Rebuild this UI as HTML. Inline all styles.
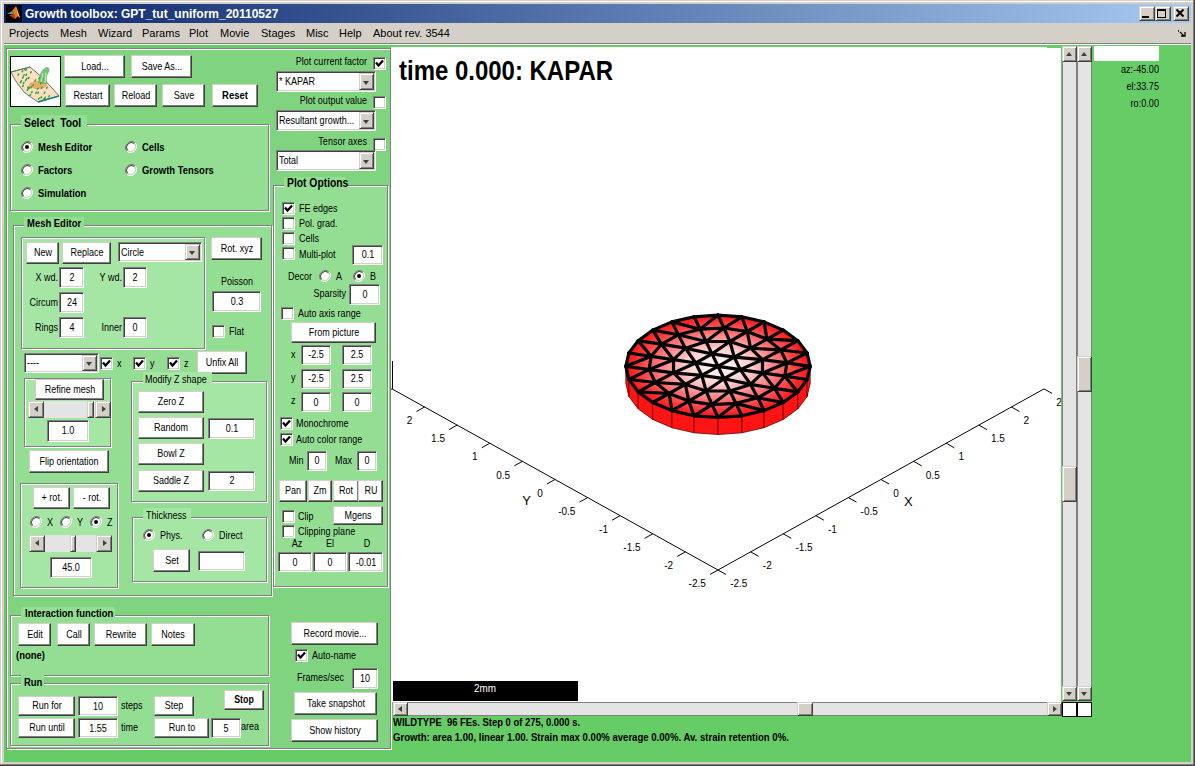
<!DOCTYPE html>
<html><head><meta charset="utf-8"><style>
html,body{margin:0;padding:0;width:1195px;height:766px;overflow:hidden;background:#d4d0c8;font-family:"Liberation Sans",sans-serif}
#root{position:relative;width:1195px;height:766px;overflow:hidden}
.t{position:absolute;white-space:pre;font-family:"Liberation Sans",sans-serif}
.b{position:absolute;background:#fff;border:1px solid;border-color:#d4d0c8 #404040 #404040 #d4d0c8;box-shadow:inset -1px -1px 0 #808080}
.sb{position:absolute;background:#d4d0c8;border:1px solid;border-color:#d4d0c8 #404040 #404040 #d4d0c8;box-shadow:inset 1px 1px 0 #fff,inset -1px -1px 0 #808080}
.e{position:absolute;background:#fff;border:1px solid;border-color:#808080 #fff #fff #808080;box-shadow:inset 1px 1px 0 #404040,inset -1px -1px 0 #d4d0c8}
.c{position:absolute;width:11px;height:11px;background:#fff;border:1px solid;border-color:#808080 #fff #fff #808080;box-shadow:inset 1px 1px 0 #404040,inset -1px -1px 0 #d4d0c8}
</style></head><body><div id="root">
<div style="position:absolute;left:0px;top:0px;width:1195px;height:766px;background:#d4d0c8"></div>
<div style="position:absolute;left:1px;top:1px;width:1192px;height:763px;border-left:1px solid #fff;border-top:1px solid #fff;box-sizing:border-box"></div>
<div style="position:absolute;left:0px;top:0px;width:1195px;height:766px;border-right:1px solid #404040;border-bottom:1px solid #404040;box-sizing:border-box"></div>
<div style="position:absolute;left:0px;top:0px;width:1194px;height:765px;border-right:1px solid #808080;border-bottom:1px solid #808080;box-sizing:border-box"></div>
<div style="position:absolute;left:4px;top:4px;width:1187px;height:19px;background:linear-gradient(to right,#0a246a,#a6caf0)"></div>
<svg style="position:absolute;left:6px;top:5px" width="16" height="17" viewBox="0 0 16 17">
<rect width="16" height="17" fill="#000"/>
<path d="M1 9 L6 6 L8 9 Z" fill="#3aa0c8"/>
<path d="M6 6 L10 1 L14 13 L12 11 L9 14 L8 9 Z" fill="#e87818"/>
<path d="M10 1 L14 13 L12 11 Z" fill="#f8c040"/>
<path d="M3 10 L8 9 L9 14 Z" fill="#c04010"/>
</svg>
<div class="t" style="left:25px;top:8px;font-size:12px;line-height:12px;font-weight:bold;color:#fff;transform:scaleX(1.0);transform-origin:0 0;">Growth toolbox: GPT_tut_uniform_20110527</div>
<div class="sb" style="left:1139px;top:6px;width:14px;height:13px;"></div>
<div class="sb" style="left:1155px;top:6px;width:14px;height:13px;"></div>
<div class="sb" style="left:1173px;top:6px;width:14px;height:13px;"></div>
<div style="position:absolute;left:1142px;top:16px;width:7px;height:2px;background:#000"></div>
<div style="position:absolute;left:1157px;top:9px;width:7px;height:6px;border:1px solid #000;border-top-width:2px"></div>
<svg style="position:absolute;left:1175px;top:8px" width="11" height="11"><path d="M1.5 1.5 L8.5 8.5 M8.5 1.5 L1.5 8.5" stroke="#000" stroke-width="2"/></svg>
<div class="t" style="left:9px;top:28px;font-size:11px;line-height:11px;color:#000;transform:scaleX(1.0);transform-origin:0 0;">Projects</div>
<div class="t" style="left:60px;top:28px;font-size:11px;line-height:11px;color:#000;transform:scaleX(1.0);transform-origin:0 0;">Mesh</div>
<div class="t" style="left:98px;top:28px;font-size:11px;line-height:11px;color:#000;transform:scaleX(1.0);transform-origin:0 0;">Wizard</div>
<div class="t" style="left:142px;top:28px;font-size:11px;line-height:11px;color:#000;transform:scaleX(1.0);transform-origin:0 0;">Params</div>
<div class="t" style="left:189px;top:28px;font-size:11px;line-height:11px;color:#000;transform:scaleX(1.0);transform-origin:0 0;">Plot</div>
<div class="t" style="left:220px;top:28px;font-size:11px;line-height:11px;color:#000;transform:scaleX(1.0);transform-origin:0 0;">Movie</div>
<div class="t" style="left:261px;top:28px;font-size:11px;line-height:11px;color:#000;transform:scaleX(1.0);transform-origin:0 0;">Stages</div>
<div class="t" style="left:306px;top:28px;font-size:11px;line-height:11px;color:#000;transform:scaleX(1.0);transform-origin:0 0;">Misc</div>
<div class="t" style="left:339px;top:28px;font-size:11px;line-height:11px;color:#000;transform:scaleX(1.0);transform-origin:0 0;">Help</div>
<div class="t" style="left:373px;top:28px;font-size:11px;line-height:11px;color:#000;transform:scaleX(1.0);transform-origin:0 0;">About rev. 3544</div>
<svg style="position:absolute;left:1177px;top:30px" width="10" height="8"><path d="M1 1 L2 1 M3 2 L7 6 M4 6 L8 6 L8 2" stroke="#000" stroke-width="1.3" fill="none"/></svg>
<div style="position:absolute;left:4px;top:43px;width:1187px;height:1px;background:#808080"></div>
<div style="position:absolute;left:4px;top:44px;width:1187px;height:1px;background:#fff"></div>
<div style="position:absolute;left:4px;top:45px;width:1187px;height:717px;background:#66cc66"></div>
<div style="position:absolute;left:6px;top:48px;width:383px;height:699px;border:1px solid #808080;background:#80d480;box-shadow:1px 1px 0 #fff, inset 1px 1px 0 #fff"></div>
<div style="position:absolute;left:10px;top:56px;width:49px;height:49px;border:1px solid #000;background:#fff;overflow:hidden">
<svg width="49" height="49" viewBox="1 1 49 49">
<path d="M1,16 L20,11 Q34,22 49,40 L28,46 Q20,41 14,36 Q8,29 4,22 Z" fill="#fbdfc2" stroke="#3a3a3a" stroke-width="0.7"/>
<path d="M28,46 L49,40" stroke="#1f7f7f" stroke-width="1.6"/>
<path d="M1,16 L20,11" stroke="#3f7f6f" stroke-width="0.9"/>
<ellipse cx="28" cy="29" rx="9" ry="4" fill="#eb9a4a" opacity="0.75"/>
<path d="M28,27 Q29,15 36,11 Q41,11 39,16 Q36,19 37,28 Z" fill="#5fb85f" opacity="0.85"/>
<path d="M31,26 L33,17 M35,27 L36,17" stroke="#d8f0d8" stroke-width="0.9"/>
<g fill="#2f9f3f"><ellipse cx="12.9" cy="30.0" rx="0.8" ry="1.4" transform="rotate(30 12.9 30.0)"/><ellipse cx="19.0" cy="32.1" rx="0.8" ry="1.4" transform="rotate(30 19.0 32.1)"/><ellipse cx="13.9" cy="19.2" rx="0.8" ry="1.4" transform="rotate(30 13.9 19.2)"/><ellipse cx="31.2" cy="41.4" rx="0.8" ry="1.4" transform="rotate(30 31.2 41.4)"/><ellipse cx="26.1" cy="36.9" rx="0.8" ry="1.4" transform="rotate(30 26.1 36.9)"/><ellipse cx="36.9" cy="31.7" rx="0.8" ry="1.4" transform="rotate(30 36.9 31.7)"/><ellipse cx="35.1" cy="41.8" rx="0.8" ry="1.4" transform="rotate(30 35.1 41.8)"/><ellipse cx="34.8" cy="43.2" rx="0.8" ry="1.4" transform="rotate(30 34.8 43.2)"/><ellipse cx="20.2" cy="39.0" rx="0.8" ry="1.4" transform="rotate(30 20.2 39.0)"/><ellipse cx="8.3" cy="18.6" rx="0.8" ry="1.4" transform="rotate(30 8.3 18.6)"/><ellipse cx="25.3" cy="24.5" rx="0.8" ry="1.4" transform="rotate(30 25.3 24.5)"/><ellipse cx="18.1" cy="31.5" rx="0.8" ry="1.4" transform="rotate(30 18.1 31.5)"/><ellipse cx="28.9" cy="42.6" rx="0.8" ry="1.4" transform="rotate(30 28.9 42.6)"/><ellipse cx="33.4" cy="43.5" rx="0.8" ry="1.4" transform="rotate(30 33.4 43.5)"/><ellipse cx="15.1" cy="13.2" rx="0.8" ry="1.4" transform="rotate(30 15.1 13.2)"/><ellipse cx="20.9" cy="16.3" rx="0.8" ry="1.4" transform="rotate(30 20.9 16.3)"/><ellipse cx="16.2" cy="13.7" rx="0.8" ry="1.4" transform="rotate(30 16.2 13.7)"/><ellipse cx="11.1" cy="25.3" rx="0.8" ry="1.4" transform="rotate(30 11.1 25.3)"/><ellipse cx="23.2" cy="29.2" rx="0.8" ry="1.4" transform="rotate(30 23.2 29.2)"/><ellipse cx="31.6" cy="31.8" rx="0.8" ry="1.4" transform="rotate(30 31.6 31.8)"/><ellipse cx="27.7" cy="32.7" rx="0.8" ry="1.4" transform="rotate(30 27.7 32.7)"/><ellipse cx="21.8" cy="36.2" rx="0.8" ry="1.4" transform="rotate(30 21.8 36.2)"/><ellipse cx="12.9" cy="21.5" rx="0.8" ry="1.4" transform="rotate(30 12.9 21.5)"/><ellipse cx="21.1" cy="31.3" rx="0.8" ry="1.4" transform="rotate(30 21.1 31.3)"/><ellipse cx="30.9" cy="27.3" rx="0.8" ry="1.4" transform="rotate(30 30.9 27.3)"/><ellipse cx="34.5" cy="36.8" rx="0.8" ry="1.4" transform="rotate(30 34.5 36.8)"/><ellipse cx="13.6" cy="27.0" rx="0.8" ry="1.4" transform="rotate(30 13.6 27.0)"/><ellipse cx="29.3" cy="22.2" rx="0.8" ry="1.4" transform="rotate(30 29.3 22.2)"/><ellipse cx="18.7" cy="21.9" rx="0.8" ry="1.4" transform="rotate(30 18.7 21.9)"/><ellipse cx="19.0" cy="31.8" rx="0.8" ry="1.4" transform="rotate(30 19.0 31.8)"/><ellipse cx="15.8" cy="24.2" rx="0.8" ry="1.4" transform="rotate(30 15.8 24.2)"/><ellipse cx="28.2" cy="36.7" rx="0.8" ry="1.4" transform="rotate(30 28.2 36.7)"/><ellipse cx="16.3" cy="18.8" rx="0.8" ry="1.4" transform="rotate(30 16.3 18.8)"/><ellipse cx="10.6" cy="26.2" rx="0.8" ry="1.4" transform="rotate(30 10.6 26.2)"/><ellipse cx="16.8" cy="22.7" rx="0.8" ry="1.4" transform="rotate(30 16.8 22.7)"/><ellipse cx="17.5" cy="33.8" rx="0.8" ry="1.4" transform="rotate(30 17.5 33.8)"/><ellipse cx="12.4" cy="15.2" rx="0.8" ry="1.4" transform="rotate(30 12.4 15.2)"/><ellipse cx="39.1" cy="40.3" rx="0.8" ry="1.4" transform="rotate(30 39.1 40.3)"/></g></svg></div>
<div class="b" style="left:64px;top:55px;width:59px;height:21px;"></div>
<div class="t" style="left:-505.5px;width:1200px;text-align:center;top:61px;font-size:11px;line-height:11px;color:#000;transform:scaleX(0.82);transform-origin:50% 0;">Load...</div>
<div class="b" style="left:131px;top:55px;width:59px;height:21px;"></div>
<div class="t" style="left:-438.5px;width:1200px;text-align:center;top:61px;font-size:11px;line-height:11px;color:#000;transform:scaleX(0.82);transform-origin:50% 0;">Save As...</div>
<div class="b" style="left:65px;top:84px;width:43px;height:21px;"></div>
<div class="t" style="left:-512.5px;width:1200px;text-align:center;top:90px;font-size:11px;line-height:11px;color:#000;transform:scaleX(0.82);transform-origin:50% 0;">Restart</div>
<div class="b" style="left:114px;top:84px;width:41px;height:21px;"></div>
<div class="t" style="left:-464.5px;width:1200px;text-align:center;top:90px;font-size:11px;line-height:11px;color:#000;transform:scaleX(0.82);transform-origin:50% 0;">Reload</div>
<div class="b" style="left:162px;top:84px;width:41px;height:21px;"></div>
<div class="t" style="left:-416.5px;width:1200px;text-align:center;top:90px;font-size:11px;line-height:11px;color:#000;transform:scaleX(0.82);transform-origin:50% 0;">Save</div>
<div class="b" style="left:212px;top:84px;width:44px;height:21px;"></div>
<div class="t" style="left:-365.0px;width:1200px;text-align:center;top:90px;font-size:11px;line-height:11px;font-weight:bold;color:#000;transform:scaleX(0.86);transform-origin:50% 0;">Reset</div>
<div style="position:absolute;left:10px;top:124px;width:257px;height:85px;border:1px solid #808080;background:#93de93;box-shadow:1px 1px 0 #fff, inset 1px 1px 0 #fff"></div>
<div style="position:absolute;left:21px;top:115px;width:66px;height:12px;background:#93de93"></div>
<div class="t" style="left:24px;top:117px;font-size:12px;line-height:12px;font-weight:bold;color:#000;transform:scaleX(0.86);transform-origin:0 0;">Select&nbsp; Tool</div>
<svg style="position:absolute;left:21px;top:141px" width="12" height="12"><path d="M10.2 1.8 A6 6 0 0 0 1.8 10.2" stroke="#808080" stroke-width="1" fill="none"/><path d="M1.8 10.2 A6 6 0 0 0 10.2 1.8" stroke="#ffffff" stroke-width="1" fill="none"/><circle cx="6" cy="6" r="4.5" fill="#fff"/><path d="M9.5 2.5 A5 5 0 0 0 2.5 9.5" stroke="#404040" stroke-width="1" fill="none"/><path d="M2.5 9.5 A5 5 0 0 0 9.5 2.5" stroke="#d4d0c8" stroke-width="1" fill="none"/><circle cx="6" cy="6" r="2" fill="#000"/></svg>
<div class="t" style="left:38px;top:142px;font-size:11px;line-height:11px;font-weight:bold;color:#000;transform:scaleX(0.86);transform-origin:0 0;">Mesh Editor</div>
<svg style="position:absolute;left:125px;top:141px" width="12" height="12"><path d="M10.2 1.8 A6 6 0 0 0 1.8 10.2" stroke="#808080" stroke-width="1" fill="none"/><path d="M1.8 10.2 A6 6 0 0 0 10.2 1.8" stroke="#ffffff" stroke-width="1" fill="none"/><circle cx="6" cy="6" r="4.5" fill="#fff"/><path d="M9.5 2.5 A5 5 0 0 0 2.5 9.5" stroke="#404040" stroke-width="1" fill="none"/><path d="M2.5 9.5 A5 5 0 0 0 9.5 2.5" stroke="#d4d0c8" stroke-width="1" fill="none"/></svg>
<div class="t" style="left:142px;top:142px;font-size:11px;line-height:11px;font-weight:bold;color:#000;transform:scaleX(0.86);transform-origin:0 0;">Cells</div>
<svg style="position:absolute;left:21px;top:164px" width="12" height="12"><path d="M10.2 1.8 A6 6 0 0 0 1.8 10.2" stroke="#808080" stroke-width="1" fill="none"/><path d="M1.8 10.2 A6 6 0 0 0 10.2 1.8" stroke="#ffffff" stroke-width="1" fill="none"/><circle cx="6" cy="6" r="4.5" fill="#fff"/><path d="M9.5 2.5 A5 5 0 0 0 2.5 9.5" stroke="#404040" stroke-width="1" fill="none"/><path d="M2.5 9.5 A5 5 0 0 0 9.5 2.5" stroke="#d4d0c8" stroke-width="1" fill="none"/></svg>
<div class="t" style="left:38px;top:165px;font-size:11px;line-height:11px;font-weight:bold;color:#000;transform:scaleX(0.86);transform-origin:0 0;">Factors</div>
<svg style="position:absolute;left:125px;top:164px" width="12" height="12"><path d="M10.2 1.8 A6 6 0 0 0 1.8 10.2" stroke="#808080" stroke-width="1" fill="none"/><path d="M1.8 10.2 A6 6 0 0 0 10.2 1.8" stroke="#ffffff" stroke-width="1" fill="none"/><circle cx="6" cy="6" r="4.5" fill="#fff"/><path d="M9.5 2.5 A5 5 0 0 0 2.5 9.5" stroke="#404040" stroke-width="1" fill="none"/><path d="M2.5 9.5 A5 5 0 0 0 9.5 2.5" stroke="#d4d0c8" stroke-width="1" fill="none"/></svg>
<div class="t" style="left:142px;top:165px;font-size:11px;line-height:11px;font-weight:bold;color:#000;transform:scaleX(0.86);transform-origin:0 0;">Growth Tensors</div>
<svg style="position:absolute;left:21px;top:187px" width="12" height="12"><path d="M10.2 1.8 A6 6 0 0 0 1.8 10.2" stroke="#808080" stroke-width="1" fill="none"/><path d="M1.8 10.2 A6 6 0 0 0 10.2 1.8" stroke="#ffffff" stroke-width="1" fill="none"/><circle cx="6" cy="6" r="4.5" fill="#fff"/><path d="M9.5 2.5 A5 5 0 0 0 2.5 9.5" stroke="#404040" stroke-width="1" fill="none"/><path d="M2.5 9.5 A5 5 0 0 0 9.5 2.5" stroke="#d4d0c8" stroke-width="1" fill="none"/></svg>
<div class="t" style="left:38px;top:188px;font-size:11px;line-height:11px;font-weight:bold;color:#000;transform:scaleX(0.86);transform-origin:0 0;">Simulation</div>
<div class="t" style="left:-233px;width:600px;text-align:right;top:56px;font-size:11px;line-height:11px;color:#000;transform:scaleX(0.82);transform-origin:100% 0;">Plot current factor</div>
<div class="c" style="left:373px;top:57px;"></div>
<svg style="position:absolute;left:373px;top:57px" width="13" height="13"><path d="M3 5.5 L5.5 8.5 L10 3.5" stroke="#000" stroke-width="2.2" fill="none"/></svg>
<div class="e" style="left:276px;top:71px;width:98px;height:19px;"></div>
<div class="sb" style="left:359px;top:73px;width:13px;height:15px;"></div>
<div style="position:absolute;left:363.0px;top:80.5px;width:0;height:0;border-left:3.5px solid transparent;border-right:3.5px solid transparent;border-top:4px solid #404040"></div>
<div class="t" style="left:279px;top:76px;font-size:11px;line-height:11px;color:#000;transform:scaleX(0.82);transform-origin:0 0;">* KAPAR</div>
<div class="t" style="left:-233px;width:600px;text-align:right;top:95px;font-size:11px;line-height:11px;color:#000;transform:scaleX(0.82);transform-origin:100% 0;">Plot output value</div>
<div class="c" style="left:373px;top:96px;"></div>
<div class="e" style="left:276px;top:110px;width:98px;height:19px;"></div>
<div class="sb" style="left:359px;top:112px;width:13px;height:15px;"></div>
<div style="position:absolute;left:363.0px;top:119.5px;width:0;height:0;border-left:3.5px solid transparent;border-right:3.5px solid transparent;border-top:4px solid #404040"></div>
<div class="t" style="left:279px;top:115px;font-size:11px;line-height:11px;color:#000;transform:scaleX(0.82);transform-origin:0 0;">Resultant growth...</div>
<div class="t" style="left:-233px;width:600px;text-align:right;top:136px;font-size:11px;line-height:11px;color:#000;transform:scaleX(0.82);transform-origin:100% 0;">Tensor axes</div>
<div class="c" style="left:373px;top:138px;"></div>
<div class="e" style="left:276px;top:150px;width:98px;height:19px;"></div>
<div class="sb" style="left:359px;top:152px;width:13px;height:15px;"></div>
<div style="position:absolute;left:363.0px;top:159.5px;width:0;height:0;border-left:3.5px solid transparent;border-right:3.5px solid transparent;border-top:4px solid #404040"></div>
<div class="t" style="left:279px;top:155px;font-size:11px;line-height:11px;color:#000;transform:scaleX(0.82);transform-origin:0 0;">Total</div>
<div style="position:absolute;left:273px;top:185px;width:113px;height:400px;border:1px solid #808080;background:#93de93;box-shadow:1px 1px 0 #fff, inset 1px 1px 0 #fff"></div>
<div style="position:absolute;left:284px;top:177px;width:62px;height:12px;background:#93de93"></div>
<div class="t" style="left:287px;top:177px;font-size:12px;line-height:12px;font-weight:bold;color:#000;transform:scaleX(0.86);transform-origin:0 0;">Plot Options</div>
<div class="c" style="left:282px;top:202px;"></div>
<svg style="position:absolute;left:282px;top:202px" width="13" height="13"><path d="M3 5.5 L5.5 8.5 L10 3.5" stroke="#000" stroke-width="2.2" fill="none"/></svg>
<div class="t" style="left:299px;top:203px;font-size:11px;line-height:11px;color:#000;transform:scaleX(0.82);transform-origin:0 0;">FE edges</div>
<div class="c" style="left:282px;top:217px;"></div>
<div class="t" style="left:299px;top:218px;font-size:11px;line-height:11px;color:#000;transform:scaleX(0.82);transform-origin:0 0;">Pol. grad.</div>
<div class="c" style="left:282px;top:232px;"></div>
<div class="t" style="left:299px;top:233px;font-size:11px;line-height:11px;color:#000;transform:scaleX(0.82);transform-origin:0 0;">Cells</div>
<div class="c" style="left:282px;top:247px;"></div>
<div class="t" style="left:299px;top:249px;font-size:11px;line-height:11px;color:#000;transform:scaleX(0.82);transform-origin:0 0;">Multi-plot</div>
<div class="e" style="left:352px;top:245px;width:29px;height:18px;"></div>
<div class="t" style="left:-232.5px;width:1200px;text-align:center;top:249px;font-size:11px;line-height:11px;color:#000;transform:scaleX(0.82);transform-origin:50% 0;">0.1</div>
<div class="t" style="left:288px;top:271px;font-size:11px;line-height:11px;color:#000;transform:scaleX(0.82);transform-origin:0 0;">Decor</div>
<svg style="position:absolute;left:319px;top:270px" width="12" height="12"><path d="M10.2 1.8 A6 6 0 0 0 1.8 10.2" stroke="#808080" stroke-width="1" fill="none"/><path d="M1.8 10.2 A6 6 0 0 0 10.2 1.8" stroke="#ffffff" stroke-width="1" fill="none"/><circle cx="6" cy="6" r="4.5" fill="#fff"/><path d="M9.5 2.5 A5 5 0 0 0 2.5 9.5" stroke="#404040" stroke-width="1" fill="none"/><path d="M2.5 9.5 A5 5 0 0 0 9.5 2.5" stroke="#d4d0c8" stroke-width="1" fill="none"/></svg>
<div class="t" style="left:336px;top:271px;font-size:11px;line-height:11px;color:#000;transform:scaleX(0.82);transform-origin:0 0;">A</div>
<svg style="position:absolute;left:353px;top:270px" width="12" height="12"><path d="M10.2 1.8 A6 6 0 0 0 1.8 10.2" stroke="#808080" stroke-width="1" fill="none"/><path d="M1.8 10.2 A6 6 0 0 0 10.2 1.8" stroke="#ffffff" stroke-width="1" fill="none"/><circle cx="6" cy="6" r="4.5" fill="#fff"/><path d="M9.5 2.5 A5 5 0 0 0 2.5 9.5" stroke="#404040" stroke-width="1" fill="none"/><path d="M2.5 9.5 A5 5 0 0 0 9.5 2.5" stroke="#d4d0c8" stroke-width="1" fill="none"/><circle cx="6" cy="6" r="2" fill="#000"/></svg>
<div class="t" style="left:370px;top:271px;font-size:11px;line-height:11px;color:#000;transform:scaleX(0.82);transform-origin:0 0;">B</div>
<div class="t" style="left:-254px;width:600px;text-align:right;top:288px;font-size:11px;line-height:11px;color:#000;transform:scaleX(0.82);transform-origin:100% 0;">Sparsity</div>
<div class="e" style="left:349px;top:284px;width:29px;height:19px;"></div>
<div class="t" style="left:-235.5px;width:1200px;text-align:center;top:289px;font-size:11px;line-height:11px;color:#000;transform:scaleX(0.82);transform-origin:50% 0;">0</div>
<div class="c" style="left:281px;top:307px;"></div>
<div class="t" style="left:298px;top:308px;font-size:11px;line-height:11px;color:#000;transform:scaleX(0.82);transform-origin:0 0;">Auto axis range</div>
<div class="b" style="left:291px;top:322px;width:83px;height:19px;"></div>
<div class="t" style="left:-266.5px;width:1200px;text-align:center;top:327px;font-size:11px;line-height:11px;color:#000;transform:scaleX(0.82);transform-origin:50% 0;">From picture</div>
<div class="t" style="left:291px;top:349px;font-size:11px;line-height:11px;color:#000;transform:scaleX(0.82);transform-origin:0 0;">x</div>
<div class="e" style="left:301px;top:345px;width:28px;height:18px;"></div>
<div class="t" style="left:-284.0px;width:1200px;text-align:center;top:349px;font-size:11px;line-height:11px;color:#000;transform:scaleX(0.82);transform-origin:50% 0;">-2.5</div>
<div class="e" style="left:342px;top:345px;width:28px;height:18px;"></div>
<div class="t" style="left:-243.0px;width:1200px;text-align:center;top:349px;font-size:11px;line-height:11px;color:#000;transform:scaleX(0.82);transform-origin:50% 0;">2.5</div>
<div class="t" style="left:291px;top:372px;font-size:11px;line-height:11px;color:#000;transform:scaleX(0.82);transform-origin:0 0;">y</div>
<div class="e" style="left:301px;top:369px;width:28px;height:18px;"></div>
<div class="t" style="left:-284.0px;width:1200px;text-align:center;top:373px;font-size:11px;line-height:11px;color:#000;transform:scaleX(0.82);transform-origin:50% 0;">-2.5</div>
<div class="e" style="left:342px;top:369px;width:28px;height:18px;"></div>
<div class="t" style="left:-243.0px;width:1200px;text-align:center;top:373px;font-size:11px;line-height:11px;color:#000;transform:scaleX(0.82);transform-origin:50% 0;">2.5</div>
<div class="t" style="left:291px;top:395px;font-size:11px;line-height:11px;color:#000;transform:scaleX(0.82);transform-origin:0 0;">z</div>
<div class="e" style="left:301px;top:392px;width:28px;height:18px;"></div>
<div class="t" style="left:-284.0px;width:1200px;text-align:center;top:397px;font-size:11px;line-height:11px;color:#000;transform:scaleX(0.82);transform-origin:50% 0;">0</div>
<div class="e" style="left:342px;top:392px;width:28px;height:18px;"></div>
<div class="t" style="left:-243.0px;width:1200px;text-align:center;top:397px;font-size:11px;line-height:11px;color:#000;transform:scaleX(0.82);transform-origin:50% 0;">0</div>
<div class="c" style="left:280px;top:417px;"></div>
<svg style="position:absolute;left:280px;top:417px" width="13" height="13"><path d="M3 5.5 L5.5 8.5 L10 3.5" stroke="#000" stroke-width="2.2" fill="none"/></svg>
<div class="t" style="left:296px;top:418px;font-size:11px;line-height:11px;color:#000;transform:scaleX(0.82);transform-origin:0 0;">Monochrome</div>
<div class="c" style="left:280px;top:433px;"></div>
<svg style="position:absolute;left:280px;top:433px" width="13" height="13"><path d="M3 5.5 L5.5 8.5 L10 3.5" stroke="#000" stroke-width="2.2" fill="none"/></svg>
<div class="t" style="left:296px;top:434px;font-size:11px;line-height:11px;color:#000;transform:scaleX(0.82);transform-origin:0 0;">Auto color range</div>
<div class="t" style="left:289px;top:455px;font-size:11px;line-height:11px;color:#000;transform:scaleX(0.82);transform-origin:0 0;">Min</div>
<div class="e" style="left:307px;top:451px;width:18px;height:18px;"></div>
<div class="t" style="left:-283.0px;width:1200px;text-align:center;top:455px;font-size:11px;line-height:11px;color:#000;transform:scaleX(0.82);transform-origin:50% 0;">0</div>
<div class="t" style="left:335px;top:455px;font-size:11px;line-height:11px;color:#000;transform:scaleX(0.82);transform-origin:0 0;">Max</div>
<div class="e" style="left:357px;top:451px;width:18px;height:18px;"></div>
<div class="t" style="left:-233.0px;width:1200px;text-align:center;top:455px;font-size:11px;line-height:11px;color:#000;transform:scaleX(0.82);transform-origin:50% 0;">0</div>
<div class="b" style="left:279px;top:480px;width:26px;height:20px;"></div>
<div class="t" style="left:-307.0px;width:1200px;text-align:center;top:485px;font-size:11px;line-height:11px;color:#000;transform:scaleX(0.82);transform-origin:50% 0;">Pan</div>
<div class="b" style="left:308px;top:480px;width:22px;height:20px;"></div>
<div class="t" style="left:-280.0px;width:1200px;text-align:center;top:485px;font-size:11px;line-height:11px;color:#000;transform:scaleX(0.82);transform-origin:50% 0;">Zm</div>
<div class="b" style="left:333px;top:480px;width:24px;height:20px;"></div>
<div class="t" style="left:-254.0px;width:1200px;text-align:center;top:485px;font-size:11px;line-height:11px;color:#000;transform:scaleX(0.82);transform-origin:50% 0;">Rot</div>
<div class="b" style="left:358px;top:480px;width:23px;height:20px;"></div>
<div class="t" style="left:-229.5px;width:1200px;text-align:center;top:485px;font-size:11px;line-height:11px;color:#000;transform:scaleX(0.82);transform-origin:50% 0;">RU</div>
<div class="c" style="left:282px;top:510px;"></div>
<div class="t" style="left:298px;top:511px;font-size:11px;line-height:11px;color:#000;transform:scaleX(0.82);transform-origin:0 0;">Clip</div>
<div class="b" style="left:333px;top:506px;width:48px;height:17px;"></div>
<div class="t" style="left:-242.0px;width:1200px;text-align:center;top:510px;font-size:11px;line-height:11px;color:#000;transform:scaleX(0.82);transform-origin:50% 0;">Mgens</div>
<div class="t" style="left:-303px;width:1200px;text-align:center;top:538px;font-size:11px;line-height:11px;color:#000;transform:scaleX(0.82);transform-origin:50% 0;">Az</div>
<div class="t" style="left:-270px;width:1200px;text-align:center;top:538px;font-size:11px;line-height:11px;color:#000;transform:scaleX(0.82);transform-origin:50% 0;">El</div>
<div class="t" style="left:-233px;width:1200px;text-align:center;top:538px;font-size:11px;line-height:11px;color:#000;transform:scaleX(0.82);transform-origin:50% 0;">D</div>
<div class="c" style="left:282px;top:525px;"></div>
<div class="t" style="left:298px;top:526px;font-size:11px;line-height:11px;color:#000;transform:scaleX(0.82);transform-origin:0 0;">Clipping plane</div>
<div class="e" style="left:278px;top:552px;width:32px;height:18px;"></div>
<div class="t" style="left:-305.0px;width:1200px;text-align:center;top:557px;font-size:11px;line-height:11px;color:#000;transform:scaleX(0.82);transform-origin:50% 0;">0</div>
<div class="e" style="left:313px;top:552px;width:32px;height:18px;"></div>
<div class="t" style="left:-270.0px;width:1200px;text-align:center;top:557px;font-size:11px;line-height:11px;color:#000;transform:scaleX(0.82);transform-origin:50% 0;">0</div>
<div class="e" style="left:348px;top:552px;width:33px;height:18px;"></div>
<div class="t" style="left:-234.5px;width:1200px;text-align:center;top:557px;font-size:11px;line-height:11px;color:#000;transform:scaleX(0.82);transform-origin:50% 0;">-0.01</div>
<div class="b" style="left:291px;top:622px;width:85px;height:21px;"></div>
<div class="t" style="left:-265.5px;width:1200px;text-align:center;top:628px;font-size:11px;line-height:11px;color:#000;transform:scaleX(0.82);transform-origin:50% 0;">Record movie...</div>
<div class="c" style="left:295px;top:649px;"></div>
<svg style="position:absolute;left:295px;top:649px" width="13" height="13"><path d="M3 5.5 L5.5 8.5 L10 3.5" stroke="#000" stroke-width="2.2" fill="none"/></svg>
<div class="t" style="left:312px;top:650px;font-size:11px;line-height:11px;color:#000;transform:scaleX(0.82);transform-origin:0 0;">Auto-name</div>
<div class="t" style="left:297px;top:672px;font-size:11px;line-height:11px;color:#000;transform:scaleX(0.82);transform-origin:0 0;">Frames/sec</div>
<div class="e" style="left:352px;top:668px;width:24px;height:19px;"></div>
<div class="t" style="left:-235.0px;width:1200px;text-align:center;top:673px;font-size:11px;line-height:11px;color:#000;transform:scaleX(0.82);transform-origin:50% 0;">10</div>
<div class="b" style="left:294px;top:692px;width:81px;height:21px;"></div>
<div class="t" style="left:-264.5px;width:1200px;text-align:center;top:698px;font-size:11px;line-height:11px;color:#000;transform:scaleX(0.82);transform-origin:50% 0;">Take snapshot</div>
<div class="b" style="left:291px;top:719px;width:85px;height:21px;"></div>
<div class="t" style="left:-265.5px;width:1200px;text-align:center;top:725px;font-size:11px;line-height:11px;color:#000;transform:scaleX(0.82);transform-origin:50% 0;">Show history</div>
<div style="position:absolute;left:13px;top:225px;width:257px;height:369px;border:1px solid #808080;background:#93de93;box-shadow:1px 1px 0 #fff, inset 1px 1px 0 #fff"></div>
<div style="position:absolute;left:24px;top:217px;width:60px;height:12px;background:#93de93"></div>
<div class="t" style="left:27px;top:218px;font-size:11px;line-height:11px;font-weight:bold;color:#000;transform:scaleX(0.86);transform-origin:0 0;">Mesh Editor</div>
<div style="position:absolute;left:21px;top:237px;width:182px;height:110px;border:1px solid #808080;background:#a5e6a5;box-shadow:1px 1px 0 #fff, inset 1px 1px 0 #fff"></div>
<div class="b" style="left:26px;top:242px;width:31px;height:20px;"></div>
<div class="t" style="left:-557.5px;width:1200px;text-align:center;top:247px;font-size:11px;line-height:11px;color:#000;transform:scaleX(0.82);transform-origin:50% 0;">New</div>
<div class="b" style="left:62px;top:242px;width:47px;height:20px;"></div>
<div class="t" style="left:-513.5px;width:1200px;text-align:center;top:247px;font-size:11px;line-height:11px;color:#000;transform:scaleX(0.82);transform-origin:50% 0;">Replace</div>
<div class="e" style="left:118px;top:242px;width:82px;height:18px;"></div>
<div class="sb" style="left:185px;top:244px;width:13px;height:14px;"></div>
<div style="position:absolute;left:189.0px;top:251.0px;width:0;height:0;border-left:3.5px solid transparent;border-right:3.5px solid transparent;border-top:4px solid #404040"></div>
<div class="t" style="left:121px;top:247px;font-size:11px;line-height:11px;color:#000;transform:scaleX(0.82);transform-origin:0 0;">Circle</div>
<div class="b" style="left:211px;top:237px;width:49px;height:21px;"></div>
<div class="t" style="left:-363.5px;width:1200px;text-align:center;top:243px;font-size:11px;line-height:11px;color:#000;transform:scaleX(0.82);transform-origin:50% 0;">Rot. xyz</div>
<div class="t" style="left:-542px;width:600px;text-align:right;top:272px;font-size:11px;line-height:11px;color:#000;transform:scaleX(0.82);transform-origin:100% 0;">X wd.</div>
<div class="e" style="left:59px;top:267px;width:23px;height:19px;"></div>
<div class="t" style="left:-528.5px;width:1200px;text-align:center;top:272px;font-size:11px;line-height:11px;color:#000;transform:scaleX(0.82);transform-origin:50% 0;">2</div>
<div class="t" style="left:-478px;width:600px;text-align:right;top:272px;font-size:11px;line-height:11px;color:#000;transform:scaleX(0.82);transform-origin:100% 0;">Y wd.</div>
<div class="e" style="left:123px;top:267px;width:22px;height:19px;"></div>
<div class="t" style="left:-465.0px;width:1200px;text-align:center;top:272px;font-size:11px;line-height:11px;color:#000;transform:scaleX(0.82);transform-origin:50% 0;">2</div>
<div class="t" style="left:-542px;width:600px;text-align:right;top:297px;font-size:11px;line-height:11px;color:#000;transform:scaleX(0.82);transform-origin:100% 0;">Circum</div>
<div class="e" style="left:59px;top:292px;width:23px;height:19px;"></div>
<div class="t" style="left:-528.5px;width:1200px;text-align:center;top:297px;font-size:11px;line-height:11px;color:#000;transform:scaleX(0.82);transform-origin:50% 0;">24</div>
<div class="t" style="left:-542px;width:600px;text-align:right;top:322px;font-size:11px;line-height:11px;color:#000;transform:scaleX(0.82);transform-origin:100% 0;">Rings</div>
<div class="e" style="left:59px;top:317px;width:23px;height:19px;"></div>
<div class="t" style="left:-528.5px;width:1200px;text-align:center;top:322px;font-size:11px;line-height:11px;color:#000;transform:scaleX(0.82);transform-origin:50% 0;">4</div>
<div class="t" style="left:-478px;width:600px;text-align:right;top:322px;font-size:11px;line-height:11px;color:#000;transform:scaleX(0.82);transform-origin:100% 0;">Inner</div>
<div class="e" style="left:123px;top:317px;width:22px;height:19px;"></div>
<div class="t" style="left:-465.0px;width:1200px;text-align:center;top:322px;font-size:11px;line-height:11px;color:#000;transform:scaleX(0.82);transform-origin:50% 0;">0</div>
<div class="t" style="left:-363px;width:1200px;text-align:center;top:276px;font-size:11px;line-height:11px;color:#000;transform:scaleX(0.82);transform-origin:50% 0;">Poisson</div>
<div class="e" style="left:212px;top:291px;width:47px;height:19px;"></div>
<div class="t" style="left:-363.5px;width:1200px;text-align:center;top:296px;font-size:11px;line-height:11px;color:#000;transform:scaleX(0.82);transform-origin:50% 0;">0.3</div>
<div class="c" style="left:212px;top:325px;"></div>
<div class="t" style="left:229px;top:326px;font-size:11px;line-height:11px;color:#000;transform:scaleX(0.82);transform-origin:0 0;">Flat</div>
<div class="e" style="left:24px;top:353px;width:73px;height:18px;"></div>
<div class="sb" style="left:82px;top:355px;width:13px;height:14px;"></div>
<div style="position:absolute;left:86.0px;top:362.0px;width:0;height:0;border-left:3.5px solid transparent;border-right:3.5px solid transparent;border-top:4px solid #404040"></div>
<div class="t" style="left:27px;top:357px;font-size:11px;line-height:11px;color:#000;transform:scaleX(0.82);transform-origin:0 0;">----</div>
<div class="c" style="left:100px;top:357px;"></div>
<svg style="position:absolute;left:100px;top:357px" width="13" height="13"><path d="M3 5.5 L5.5 8.5 L10 3.5" stroke="#000" stroke-width="2.2" fill="none"/></svg>
<div class="t" style="left:117px;top:358px;font-size:11px;line-height:11px;color:#000;transform:scaleX(0.82);transform-origin:0 0;">x</div>
<div class="c" style="left:133px;top:357px;"></div>
<svg style="position:absolute;left:133px;top:357px" width="13" height="13"><path d="M3 5.5 L5.5 8.5 L10 3.5" stroke="#000" stroke-width="2.2" fill="none"/></svg>
<div class="t" style="left:150px;top:358px;font-size:11px;line-height:11px;color:#000;transform:scaleX(0.82);transform-origin:0 0;">y</div>
<div class="c" style="left:167px;top:357px;"></div>
<svg style="position:absolute;left:167px;top:357px" width="13" height="13"><path d="M3 5.5 L5.5 8.5 L10 3.5" stroke="#000" stroke-width="2.2" fill="none"/></svg>
<div class="t" style="left:184px;top:358px;font-size:11px;line-height:11px;color:#000;transform:scaleX(0.82);transform-origin:0 0;">z</div>
<div class="b" style="left:197px;top:351px;width:48px;height:21px;"></div>
<div class="t" style="left:-378.0px;width:1200px;text-align:center;top:357px;font-size:11px;line-height:11px;color:#000;transform:scaleX(0.82);transform-origin:50% 0;">Unfix All</div>
<div style="position:absolute;left:24px;top:378px;width:85px;height:67px;border:1px solid #808080;background:#a5e6a5;box-shadow:1px 1px 0 #fff, inset 1px 1px 0 #fff"></div>
<div class="b" style="left:35px;top:379px;width:67px;height:19px;"></div>
<div class="t" style="left:-530.5px;width:1200px;text-align:center;top:384px;font-size:11px;line-height:11px;color:#000;transform:scaleX(0.82);transform-origin:50% 0;">Refine mesh</div>
<div style="position:absolute;left:28px;top:401px;width:83px;height:17px;background:#e4e4e4"></div>
<div class="sb" style="left:28px;top:401px;width:14px;height:15px;"></div>
<div style="position:absolute;left:33.5px;top:406.0px;width:0;height:0;border-top:3.5px solid transparent;border-bottom:3.5px solid transparent;border-right:4px solid #404040"></div>
<div class="sb" style="left:95px;top:401px;width:14px;height:15px;"></div>
<div style="position:absolute;left:101.5px;top:406.0px;width:0;height:0;border-top:3.5px solid transparent;border-bottom:3.5px solid transparent;border-left:4px solid #404040"></div>
<div class="sb" style="left:87px;top:401px;width:5px;height:15px"></div>
<div class="e" style="left:47px;top:420px;width:40px;height:20px;"></div>
<div class="t" style="left:-532.0px;width:1200px;text-align:center;top:425px;font-size:11px;line-height:11px;color:#000;transform:scaleX(0.82);transform-origin:50% 0;">1.0</div>
<div class="b" style="left:29px;top:450px;width:78px;height:21px;"></div>
<div class="t" style="left:-531.0px;width:1200px;text-align:center;top:456px;font-size:11px;line-height:11px;color:#000;transform:scaleX(0.82);transform-origin:50% 0;">Flip orientation</div>
<div style="position:absolute;left:20px;top:483px;width:96px;height:103px;border:1px solid #808080;background:#a5e6a5;box-shadow:1px 1px 0 #fff, inset 1px 1px 0 #fff"></div>
<div class="b" style="left:33px;top:487px;width:35px;height:20px;"></div>
<div class="t" style="left:-548.5px;width:1200px;text-align:center;top:492px;font-size:11px;line-height:11px;color:#000;transform:scaleX(0.82);transform-origin:50% 0;">+ rot.</div>
<div class="b" style="left:73px;top:487px;width:35px;height:20px;"></div>
<div class="t" style="left:-508.5px;width:1200px;text-align:center;top:492px;font-size:11px;line-height:11px;color:#000;transform:scaleX(0.82);transform-origin:50% 0;">- rot.</div>
<svg style="position:absolute;left:30px;top:516px" width="12" height="12"><path d="M10.2 1.8 A6 6 0 0 0 1.8 10.2" stroke="#808080" stroke-width="1" fill="none"/><path d="M1.8 10.2 A6 6 0 0 0 10.2 1.8" stroke="#ffffff" stroke-width="1" fill="none"/><circle cx="6" cy="6" r="4.5" fill="#fff"/><path d="M9.5 2.5 A5 5 0 0 0 2.5 9.5" stroke="#404040" stroke-width="1" fill="none"/><path d="M2.5 9.5 A5 5 0 0 0 9.5 2.5" stroke="#d4d0c8" stroke-width="1" fill="none"/></svg>
<div class="t" style="left:47px;top:517px;font-size:11px;line-height:11px;color:#000;transform:scaleX(0.82);transform-origin:0 0;">X</div>
<svg style="position:absolute;left:60px;top:516px" width="12" height="12"><path d="M10.2 1.8 A6 6 0 0 0 1.8 10.2" stroke="#808080" stroke-width="1" fill="none"/><path d="M1.8 10.2 A6 6 0 0 0 10.2 1.8" stroke="#ffffff" stroke-width="1" fill="none"/><circle cx="6" cy="6" r="4.5" fill="#fff"/><path d="M9.5 2.5 A5 5 0 0 0 2.5 9.5" stroke="#404040" stroke-width="1" fill="none"/><path d="M2.5 9.5 A5 5 0 0 0 9.5 2.5" stroke="#d4d0c8" stroke-width="1" fill="none"/></svg>
<div class="t" style="left:77px;top:517px;font-size:11px;line-height:11px;color:#000;transform:scaleX(0.82);transform-origin:0 0;">Y</div>
<svg style="position:absolute;left:90px;top:516px" width="12" height="12"><path d="M10.2 1.8 A6 6 0 0 0 1.8 10.2" stroke="#808080" stroke-width="1" fill="none"/><path d="M1.8 10.2 A6 6 0 0 0 10.2 1.8" stroke="#ffffff" stroke-width="1" fill="none"/><circle cx="6" cy="6" r="4.5" fill="#fff"/><path d="M9.5 2.5 A5 5 0 0 0 2.5 9.5" stroke="#404040" stroke-width="1" fill="none"/><path d="M2.5 9.5 A5 5 0 0 0 9.5 2.5" stroke="#d4d0c8" stroke-width="1" fill="none"/><circle cx="6" cy="6" r="2" fill="#000"/></svg>
<div class="t" style="left:107px;top:517px;font-size:11px;line-height:11px;color:#000;transform:scaleX(0.82);transform-origin:0 0;">Z</div>
<div style="position:absolute;left:29px;top:535px;width:83px;height:17px;background:#e4e4e4"></div>
<div class="sb" style="left:29px;top:535px;width:14px;height:15px;"></div>
<div style="position:absolute;left:34.5px;top:540.0px;width:0;height:0;border-top:3.5px solid transparent;border-bottom:3.5px solid transparent;border-right:4px solid #404040"></div>
<div class="sb" style="left:96px;top:535px;width:14px;height:15px;"></div>
<div style="position:absolute;left:102.5px;top:540.0px;width:0;height:0;border-top:3.5px solid transparent;border-bottom:3.5px solid transparent;border-left:4px solid #404040"></div>
<div class="sb" style="left:70px;top:535px;width:4px;height:15px"></div>
<div class="e" style="left:50px;top:557px;width:40px;height:19px;"></div>
<div class="t" style="left:-529.0px;width:1200px;text-align:center;top:562px;font-size:11px;line-height:11px;color:#000;transform:scaleX(0.82);transform-origin:50% 0;">45.0</div>
<div style="position:absolute;left:131px;top:381px;width:134px;height:119px;border:1px solid #808080;background:#a5e6a5;box-shadow:1px 1px 0 #fff, inset 1px 1px 0 #fff"></div>
<div style="position:absolute;left:143px;top:372px;width:69px;height:14px;background:#a5e6a5"></div>
<div class="t" style="left:145px;top:374px;font-size:11px;line-height:11px;color:#000;transform:scaleX(0.82);transform-origin:0 0;">Modify Z shape</div>
<style></style>
<div class="b" style="left:138px;top:391px;width:64px;height:20px;"></div>
<div class="t" style="left:-429.0px;width:1200px;text-align:center;top:396px;font-size:11px;line-height:11px;color:#000;transform:scaleX(0.82);transform-origin:50% 0;">Zero Z</div>
<div class="b" style="left:138px;top:417px;width:64px;height:20px;"></div>
<div class="t" style="left:-429.0px;width:1200px;text-align:center;top:422px;font-size:11px;line-height:11px;color:#000;transform:scaleX(0.82);transform-origin:50% 0;">Random</div>
<div class="e" style="left:208px;top:418px;width:45px;height:19px;"></div>
<div class="t" style="left:-368.5px;width:1200px;text-align:center;top:423px;font-size:11px;line-height:11px;color:#000;transform:scaleX(0.82);transform-origin:50% 0;">0.1</div>
<div class="b" style="left:138px;top:443px;width:64px;height:20px;"></div>
<div class="t" style="left:-429.0px;width:1200px;text-align:center;top:448px;font-size:11px;line-height:11px;color:#000;transform:scaleX(0.82);transform-origin:50% 0;">Bowl Z</div>
<div class="b" style="left:138px;top:470px;width:64px;height:20px;"></div>
<div class="t" style="left:-429.0px;width:1200px;text-align:center;top:475px;font-size:11px;line-height:11px;color:#000;transform:scaleX(0.82);transform-origin:50% 0;">Saddle Z</div>
<div class="e" style="left:208px;top:471px;width:45px;height:18px;"></div>
<div class="t" style="left:-368.5px;width:1200px;text-align:center;top:475px;font-size:11px;line-height:11px;color:#000;transform:scaleX(0.82);transform-origin:50% 0;">2</div>
<div style="position:absolute;left:132px;top:517px;width:133px;height:63px;border:1px solid #808080;background:#a5e6a5;box-shadow:1px 1px 0 #fff, inset 1px 1px 0 #fff"></div>
<div style="position:absolute;left:143px;top:508px;width:48px;height:14px;background:#a5e6a5"></div>
<div class="t" style="left:146px;top:510px;font-size:11px;line-height:11px;color:#000;transform:scaleX(0.82);transform-origin:0 0;">Thickness</div>
<svg style="position:absolute;left:143px;top:529px" width="12" height="12"><path d="M10.2 1.8 A6 6 0 0 0 1.8 10.2" stroke="#808080" stroke-width="1" fill="none"/><path d="M1.8 10.2 A6 6 0 0 0 10.2 1.8" stroke="#ffffff" stroke-width="1" fill="none"/><circle cx="6" cy="6" r="4.5" fill="#fff"/><path d="M9.5 2.5 A5 5 0 0 0 2.5 9.5" stroke="#404040" stroke-width="1" fill="none"/><path d="M2.5 9.5 A5 5 0 0 0 9.5 2.5" stroke="#d4d0c8" stroke-width="1" fill="none"/><circle cx="6" cy="6" r="2" fill="#000"/></svg>
<div class="t" style="left:160px;top:530px;font-size:11px;line-height:11px;color:#000;transform:scaleX(0.82);transform-origin:0 0;">Phys.</div>
<svg style="position:absolute;left:202px;top:529px" width="12" height="12"><path d="M10.2 1.8 A6 6 0 0 0 1.8 10.2" stroke="#808080" stroke-width="1" fill="none"/><path d="M1.8 10.2 A6 6 0 0 0 10.2 1.8" stroke="#ffffff" stroke-width="1" fill="none"/><circle cx="6" cy="6" r="4.5" fill="#fff"/><path d="M9.5 2.5 A5 5 0 0 0 2.5 9.5" stroke="#404040" stroke-width="1" fill="none"/><path d="M2.5 9.5 A5 5 0 0 0 9.5 2.5" stroke="#d4d0c8" stroke-width="1" fill="none"/></svg>
<div class="t" style="left:219px;top:530px;font-size:11px;line-height:11px;color:#000;transform:scaleX(0.82);transform-origin:0 0;">Direct</div>
<div class="b" style="left:153px;top:549px;width:35px;height:21px;"></div>
<div class="t" style="left:-428.5px;width:1200px;text-align:center;top:555px;font-size:11px;line-height:11px;color:#000;transform:scaleX(0.82);transform-origin:50% 0;">Set</div>
<div class="e" style="left:198px;top:551px;width:45px;height:18px;"></div>
<div style="position:absolute;left:10px;top:615px;width:257px;height:59px;border:1px solid #808080;background:#93de93;box-shadow:1px 1px 0 #fff, inset 1px 1px 0 #fff"></div>
<div style="position:absolute;left:21px;top:607px;width:94px;height:12px;background:#93de93"></div>
<div class="t" style="left:25px;top:608px;font-size:11px;line-height:11px;font-weight:bold;color:#000;transform:scaleX(0.86);transform-origin:0 0;">Interaction function</div>
<div class="b" style="left:18px;top:623px;width:31px;height:21px;"></div>
<div class="t" style="left:-565.5px;width:1200px;text-align:center;top:629px;font-size:11px;line-height:11px;color:#000;transform:scaleX(0.82);transform-origin:50% 0;">Edit</div>
<div class="b" style="left:57px;top:623px;width:31px;height:21px;"></div>
<div class="t" style="left:-526.5px;width:1200px;text-align:center;top:629px;font-size:11px;line-height:11px;color:#000;transform:scaleX(0.82);transform-origin:50% 0;">Call</div>
<div class="b" style="left:94px;top:623px;width:51px;height:21px;"></div>
<div class="t" style="left:-479.5px;width:1200px;text-align:center;top:629px;font-size:11px;line-height:11px;color:#000;transform:scaleX(0.82);transform-origin:50% 0;">Rewrite</div>
<div class="b" style="left:151px;top:623px;width:42px;height:21px;"></div>
<div class="t" style="left:-427.0px;width:1200px;text-align:center;top:629px;font-size:11px;line-height:11px;color:#000;transform:scaleX(0.82);transform-origin:50% 0;">Notes</div>
<div class="t" style="left:16px;top:650px;font-size:11px;line-height:11px;font-weight:bold;color:#000;transform:scaleX(0.86);transform-origin:0 0;">(none)</div>
<div style="position:absolute;left:10px;top:683px;width:257px;height:61px;border:1px solid #808080;background:#93de93;box-shadow:1px 1px 0 #fff, inset 1px 1px 0 #fff"></div>
<div style="position:absolute;left:21px;top:675px;width:23px;height:12px;background:#93de93"></div>
<div class="t" style="left:24px;top:677px;font-size:11px;line-height:11px;font-weight:bold;color:#000;transform:scaleX(0.86);transform-origin:0 0;">Run</div>
<div class="b" style="left:18px;top:696px;width:55px;height:18px;"></div>
<div class="t" style="left:-553.5px;width:1200px;text-align:center;top:700px;font-size:11px;line-height:11px;color:#000;transform:scaleX(0.82);transform-origin:50% 0;">Run for</div>
<div class="e" style="left:78px;top:696px;width:38px;height:18px;"></div>
<div class="t" style="left:-502.0px;width:1200px;text-align:center;top:701px;font-size:11px;line-height:11px;color:#000;transform:scaleX(0.82);transform-origin:50% 0;">10</div>
<div class="t" style="left:121px;top:700px;font-size:11px;line-height:11px;color:#000;transform:scaleX(0.82);transform-origin:0 0;">steps</div>
<div class="b" style="left:154px;top:696px;width:38px;height:18px;"></div>
<div class="t" style="left:-426.0px;width:1200px;text-align:center;top:700px;font-size:11px;line-height:11px;color:#000;transform:scaleX(0.82);transform-origin:50% 0;">Step</div>
<div class="b" style="left:224px;top:690px;width:38px;height:18px;"></div>
<div class="t" style="left:-356.0px;width:1200px;text-align:center;top:694px;font-size:11px;line-height:11px;font-weight:bold;color:#000;transform:scaleX(0.8);transform-origin:50% 0;">Stop</div>
<div class="b" style="left:18px;top:718px;width:55px;height:18px;"></div>
<div class="t" style="left:-553.5px;width:1200px;text-align:center;top:722px;font-size:11px;line-height:11px;color:#000;transform:scaleX(0.82);transform-origin:50% 0;">Run until</div>
<div class="e" style="left:78px;top:718px;width:38px;height:18px;"></div>
<div class="t" style="left:-502.0px;width:1200px;text-align:center;top:723px;font-size:11px;line-height:11px;color:#000;transform:scaleX(0.82);transform-origin:50% 0;">1.55</div>
<div class="t" style="left:121px;top:722px;font-size:11px;line-height:11px;color:#000;transform:scaleX(0.82);transform-origin:0 0;">time</div>
<div class="b" style="left:154px;top:718px;width:53px;height:18px;"></div>
<div class="t" style="left:-418.5px;width:1200px;text-align:center;top:722px;font-size:11px;line-height:11px;color:#000;transform:scaleX(0.82);transform-origin:50% 0;">Run to</div>
<div class="e" style="left:211px;top:718px;width:28px;height:18px;"></div>
<div class="t" style="left:-374.0px;width:1200px;text-align:center;top:723px;font-size:11px;line-height:11px;color:#000;transform:scaleX(0.82);transform-origin:50% 0;">5</div>
<div class="t" style="left:241px;top:721px;font-size:11px;line-height:11px;color:#000;transform:scaleX(0.82);transform-origin:0 0;">area</div>
<div style="position:absolute;left:391px;top:47px;width:670px;height:655px;background:#fff"></div>
<div style="position:absolute;left:1047px;top:47px;width:14px;height:1px;background:#66cc66"></div>
<svg style="position:absolute;left:391px;top:47px" width="670" height="655" viewBox="391 47 670 655">
<line x1="392.5" y1="361" x2="392.5" y2="388.9" stroke="#000" stroke-width="1"/>
<polyline points="392.0,388.9 718.0,570.0 1044.0,388.9" fill="none" stroke="#000" stroke-width="1"/>
<line x1="718.0" y1="570.0" x2="709.9" y2="574.5" stroke="#000" stroke-width="1"/>
<text x="705.8" y="587.2" font-size="10" text-anchor="end" font-family="Liberation Sans">-2.5</text>
<line x1="718.0" y1="570.0" x2="726.1" y2="574.5" stroke="#000" stroke-width="1"/>
<text x="730.2" y="587.2" font-size="10" text-anchor="start" font-family="Liberation Sans">-2.5</text>
<line x1="685.4" y1="551.9" x2="677.3" y2="556.4" stroke="#000" stroke-width="1"/>
<text x="673.2" y="569.1" font-size="10" text-anchor="end" font-family="Liberation Sans">-2</text>
<line x1="750.6" y1="551.9" x2="758.7" y2="556.4" stroke="#000" stroke-width="1"/>
<text x="762.8" y="569.1" font-size="10" text-anchor="start" font-family="Liberation Sans">-2</text>
<line x1="652.8" y1="533.8" x2="644.7" y2="538.3" stroke="#000" stroke-width="1"/>
<text x="640.6" y="551.0" font-size="10" text-anchor="end" font-family="Liberation Sans">-1.5</text>
<line x1="783.2" y1="533.8" x2="791.3" y2="538.3" stroke="#000" stroke-width="1"/>
<text x="795.4" y="551.0" font-size="10" text-anchor="start" font-family="Liberation Sans">-1.5</text>
<line x1="620.2" y1="515.7" x2="612.1" y2="520.2" stroke="#000" stroke-width="1"/>
<text x="608.0" y="532.9" font-size="10" text-anchor="end" font-family="Liberation Sans">-1</text>
<line x1="815.8" y1="515.7" x2="823.9" y2="520.2" stroke="#000" stroke-width="1"/>
<text x="828.0" y="532.9" font-size="10" text-anchor="start" font-family="Liberation Sans">-1</text>
<line x1="587.6" y1="497.6" x2="579.5" y2="502.1" stroke="#000" stroke-width="1"/>
<text x="575.4" y="514.8" font-size="10" text-anchor="end" font-family="Liberation Sans">-0.5</text>
<line x1="848.4" y1="497.6" x2="856.5" y2="502.1" stroke="#000" stroke-width="1"/>
<text x="860.6" y="514.8" font-size="10" text-anchor="start" font-family="Liberation Sans">-0.5</text>
<line x1="555.0" y1="479.5" x2="546.9" y2="484.0" stroke="#000" stroke-width="1"/>
<text x="542.8" y="496.7" font-size="10" text-anchor="end" font-family="Liberation Sans">0</text>
<line x1="881.0" y1="479.5" x2="889.1" y2="484.0" stroke="#000" stroke-width="1"/>
<text x="893.2" y="496.7" font-size="10" text-anchor="start" font-family="Liberation Sans">0</text>
<line x1="522.4" y1="461.3" x2="514.3" y2="465.9" stroke="#000" stroke-width="1"/>
<text x="510.2" y="478.5" font-size="10" text-anchor="end" font-family="Liberation Sans">0.5</text>
<line x1="913.6" y1="461.3" x2="921.7" y2="465.9" stroke="#000" stroke-width="1"/>
<text x="925.8" y="478.5" font-size="10" text-anchor="start" font-family="Liberation Sans">0.5</text>
<line x1="489.8" y1="443.2" x2="481.7" y2="447.8" stroke="#000" stroke-width="1"/>
<text x="477.6" y="460.4" font-size="10" text-anchor="end" font-family="Liberation Sans">1</text>
<line x1="946.2" y1="443.2" x2="954.3" y2="447.8" stroke="#000" stroke-width="1"/>
<text x="958.4" y="460.4" font-size="10" text-anchor="start" font-family="Liberation Sans">1</text>
<line x1="457.2" y1="425.1" x2="449.1" y2="429.6" stroke="#000" stroke-width="1"/>
<text x="445.0" y="442.3" font-size="10" text-anchor="end" font-family="Liberation Sans">1.5</text>
<line x1="978.8" y1="425.1" x2="986.9" y2="429.6" stroke="#000" stroke-width="1"/>
<text x="991.0" y="442.3" font-size="10" text-anchor="start" font-family="Liberation Sans">1.5</text>
<line x1="424.6" y1="407.0" x2="416.5" y2="411.5" stroke="#000" stroke-width="1"/>
<text x="412.4" y="424.2" font-size="10" text-anchor="end" font-family="Liberation Sans">2</text>
<line x1="1011.4" y1="407.0" x2="1019.5" y2="411.5" stroke="#000" stroke-width="1"/>
<text x="1023.6" y="424.2" font-size="10" text-anchor="start" font-family="Liberation Sans">2</text>
<line x1="392.0" y1="388.9" x2="383.9" y2="393.4" stroke="#000" stroke-width="1"/>
<line x1="1044.0" y1="388.9" x2="1052.1" y2="393.4" stroke="#000" stroke-width="1"/>
<text x="1056.2" y="406.1" font-size="10" text-anchor="start" font-family="Liberation Sans">2.5</text>
<text x="526.7" y="505" font-size="13" text-anchor="middle" font-family="Liberation Sans">Y</text>
<text x="908.3" y="505.6" font-size="13" text-anchor="middle" font-family="Liberation Sans">X</text>
<defs><radialGradient id="rg" gradientUnits="userSpaceOnUse" cx="718.0" cy="366.3" r="92.2" gradientTransform="translate(718.0 366.3) scale(1 0.5556) translate(-718.0 -366.3)"><stop offset="0" stop-color="#ffffff"/><stop offset="0.35" stop-color="#ffd0d0"/><stop offset="1" stop-color="#ff1010"/></radialGradient></defs>
<polygon points="625.8,366.3 628.9,379.5 628.9,396.6 625.8,383.3" fill="#ff1414" stroke="#600" stroke-width="0.8"/>
<polygon points="628.9,379.5 638.2,391.9 638.2,408.9 628.9,396.6" fill="#ff1414" stroke="#600" stroke-width="0.8"/>
<polygon points="638.2,391.9 652.8,402.5 652.8,419.5 638.2,408.9" fill="#ff1414" stroke="#600" stroke-width="0.8"/>
<polygon points="652.8,402.5 671.9,410.6 671.9,427.7 652.8,419.5" fill="#ff1414" stroke="#600" stroke-width="0.8"/>
<polygon points="671.9,410.6 694.1,415.8 694.1,432.8 671.9,427.7" fill="#ff1414" stroke="#600" stroke-width="0.8"/>
<polygon points="694.1,415.8 718.0,417.5 718.0,434.5 694.1,432.8" fill="#ff1414" stroke="#600" stroke-width="0.8"/>
<polygon points="718.0,417.5 741.9,415.8 741.9,432.8 718.0,434.5" fill="#ff1414" stroke="#600" stroke-width="0.8"/>
<polygon points="741.9,415.8 764.1,410.6 764.1,427.7 741.9,432.8" fill="#ff1414" stroke="#600" stroke-width="0.8"/>
<polygon points="764.1,410.6 783.2,402.5 783.2,419.5 764.1,427.7" fill="#ff1414" stroke="#600" stroke-width="0.8"/>
<polygon points="783.2,402.5 797.8,391.9 797.8,408.9 783.2,419.5" fill="#ff1414" stroke="#600" stroke-width="0.8"/>
<polygon points="797.8,391.9 807.1,379.5 807.1,396.6 797.8,408.9" fill="#ff1414" stroke="#600" stroke-width="0.8"/>
<polygon points="807.1,379.5 810.2,366.3 810.2,383.3 807.1,396.6" fill="#ff1414" stroke="#600" stroke-width="0.8"/>
<polygon points="783.2,330.1 764.1,321.9 741.9,316.8 718.0,315.1 694.1,316.8 671.9,321.9 652.8,330.1 638.2,340.7 628.9,353.0 625.8,366.3 628.9,379.5 638.2,391.9 652.8,402.5 671.9,410.6 694.1,415.8 718.0,417.5 741.9,415.8 764.1,410.6 783.2,402.5 797.8,391.9 807.1,379.5 810.2,366.3 807.1,353.0 797.8,340.7" fill="url(#rg)"/>
<line x1="685.4" y1="384.4" x2="655.3" y2="382.5" stroke="#000" stroke-width="3.2" stroke-linecap="round"/>
<line x1="735.9" y1="403.4" x2="718.0" y2="417.5" stroke="#000" stroke-width="3.2" stroke-linecap="round"/>
<line x1="701.7" y1="375.3" x2="706.1" y2="391.0" stroke="#000" stroke-width="3.2" stroke-linecap="round"/>
<line x1="673.5" y1="372.9" x2="649.1" y2="369.6" stroke="#000" stroke-width="3.2" stroke-linecap="round"/>
<line x1="678.3" y1="334.8" x2="652.8" y2="330.1" stroke="#000" stroke-width="3.2" stroke-linecap="round"/>
<line x1="673.5" y1="359.7" x2="649.1" y2="369.6" stroke="#000" stroke-width="3.2" stroke-linecap="round"/>
<line x1="706.1" y1="341.5" x2="724.0" y2="328.0" stroke="#000" stroke-width="3.2" stroke-linecap="round"/>
<line x1="750.6" y1="348.2" x2="780.7" y2="350.0" stroke="#000" stroke-width="3.2" stroke-linecap="round"/>
<line x1="724.0" y1="328.0" x2="741.9" y2="316.8" stroke="#000" stroke-width="3.2" stroke-linecap="round"/>
<line x1="783.2" y1="402.5" x2="797.8" y2="391.9" stroke="#000" stroke-width="3.2" stroke-linecap="round"/>
<line x1="757.7" y1="397.8" x2="774.6" y2="388.3" stroke="#000" stroke-width="3.2" stroke-linecap="round"/>
<line x1="734.3" y1="357.2" x2="750.6" y2="348.2" stroke="#000" stroke-width="3.2" stroke-linecap="round"/>
<line x1="747.2" y1="331.5" x2="764.1" y2="321.9" stroke="#000" stroke-width="3.2" stroke-linecap="round"/>
<line x1="655.3" y1="382.5" x2="638.2" y2="391.9" stroke="#000" stroke-width="3.2" stroke-linecap="round"/>
<line x1="740.3" y1="369.6" x2="762.5" y2="372.9" stroke="#000" stroke-width="3.2" stroke-linecap="round"/>
<line x1="661.4" y1="344.2" x2="652.8" y2="330.1" stroke="#000" stroke-width="3.2" stroke-linecap="round"/>
<line x1="638.2" y1="340.7" x2="628.9" y2="353.0" stroke="#000" stroke-width="3.2" stroke-linecap="round"/>
<line x1="764.1" y1="321.9" x2="741.9" y2="316.8" stroke="#000" stroke-width="3.2" stroke-linecap="round"/>
<line x1="766.9" y1="339.1" x2="747.2" y2="331.5" stroke="#000" stroke-width="3.2" stroke-linecap="round"/>
<line x1="700.1" y1="329.2" x2="678.3" y2="334.8" stroke="#000" stroke-width="3.2" stroke-linecap="round"/>
<line x1="783.2" y1="330.1" x2="797.8" y2="340.7" stroke="#000" stroke-width="3.2" stroke-linecap="round"/>
<line x1="734.3" y1="357.2" x2="762.5" y2="359.7" stroke="#000" stroke-width="3.2" stroke-linecap="round"/>
<line x1="695.7" y1="363.0" x2="685.4" y2="348.2" stroke="#000" stroke-width="3.2" stroke-linecap="round"/>
<line x1="757.7" y1="397.8" x2="764.1" y2="410.6" stroke="#000" stroke-width="3.2" stroke-linecap="round"/>
<line x1="729.9" y1="391.0" x2="757.7" y2="397.8" stroke="#000" stroke-width="3.2" stroke-linecap="round"/>
<line x1="766.9" y1="339.1" x2="780.7" y2="350.0" stroke="#000" stroke-width="3.2" stroke-linecap="round"/>
<line x1="651.2" y1="356.3" x2="625.8" y2="366.3" stroke="#000" stroke-width="3.2" stroke-linecap="round"/>
<line x1="638.2" y1="391.9" x2="652.8" y2="402.5" stroke="#000" stroke-width="3.2" stroke-linecap="round"/>
<line x1="673.5" y1="359.7" x2="651.2" y2="356.3" stroke="#000" stroke-width="3.2" stroke-linecap="round"/>
<line x1="695.7" y1="363.0" x2="673.5" y2="372.9" stroke="#000" stroke-width="3.2" stroke-linecap="round"/>
<line x1="649.1" y1="369.6" x2="625.8" y2="366.3" stroke="#000" stroke-width="3.2" stroke-linecap="round"/>
<line x1="669.1" y1="393.5" x2="688.8" y2="401.1" stroke="#000" stroke-width="3.2" stroke-linecap="round"/>
<line x1="750.6" y1="348.2" x2="766.9" y2="339.1" stroke="#000" stroke-width="3.2" stroke-linecap="round"/>
<line x1="706.1" y1="341.5" x2="685.4" y2="348.2" stroke="#000" stroke-width="3.2" stroke-linecap="round"/>
<line x1="783.2" y1="330.1" x2="764.1" y2="321.9" stroke="#000" stroke-width="3.2" stroke-linecap="round"/>
<line x1="766.9" y1="339.1" x2="783.2" y2="330.1" stroke="#000" stroke-width="3.2" stroke-linecap="round"/>
<line x1="729.9" y1="391.0" x2="750.6" y2="384.4" stroke="#000" stroke-width="3.2" stroke-linecap="round"/>
<line x1="750.6" y1="384.4" x2="757.7" y2="397.8" stroke="#000" stroke-width="3.2" stroke-linecap="round"/>
<line x1="700.1" y1="329.2" x2="694.1" y2="316.8" stroke="#000" stroke-width="3.2" stroke-linecap="round"/>
<line x1="671.9" y1="321.9" x2="652.8" y2="330.1" stroke="#000" stroke-width="3.2" stroke-linecap="round"/>
<line x1="669.1" y1="393.5" x2="671.9" y2="410.6" stroke="#000" stroke-width="3.2" stroke-linecap="round"/>
<line x1="685.4" y1="384.4" x2="669.1" y2="393.5" stroke="#000" stroke-width="3.2" stroke-linecap="round"/>
<line x1="735.9" y1="403.4" x2="741.9" y2="415.8" stroke="#000" stroke-width="3.2" stroke-linecap="round"/>
<line x1="649.1" y1="369.6" x2="655.3" y2="382.5" stroke="#000" stroke-width="3.2" stroke-linecap="round"/>
<line x1="685.4" y1="384.4" x2="706.1" y2="391.0" stroke="#000" stroke-width="3.2" stroke-linecap="round"/>
<line x1="655.3" y1="382.5" x2="669.1" y2="393.5" stroke="#000" stroke-width="3.2" stroke-linecap="round"/>
<line x1="780.7" y1="350.0" x2="807.1" y2="353.0" stroke="#000" stroke-width="3.2" stroke-linecap="round"/>
<line x1="724.0" y1="378.7" x2="740.3" y2="369.6" stroke="#000" stroke-width="3.2" stroke-linecap="round"/>
<line x1="807.1" y1="353.0" x2="797.8" y2="340.7" stroke="#000" stroke-width="3.2" stroke-linecap="round"/>
<line x1="784.8" y1="376.2" x2="807.1" y2="379.5" stroke="#000" stroke-width="3.2" stroke-linecap="round"/>
<line x1="688.8" y1="401.1" x2="671.9" y2="410.6" stroke="#000" stroke-width="3.2" stroke-linecap="round"/>
<line x1="729.9" y1="391.0" x2="735.9" y2="403.4" stroke="#000" stroke-width="3.2" stroke-linecap="round"/>
<line x1="712.0" y1="353.9" x2="695.7" y2="363.0" stroke="#000" stroke-width="3.2" stroke-linecap="round"/>
<line x1="718.0" y1="366.3" x2="734.3" y2="357.2" stroke="#000" stroke-width="3.2" stroke-linecap="round"/>
<line x1="712.0" y1="353.9" x2="685.4" y2="348.2" stroke="#000" stroke-width="3.2" stroke-linecap="round"/>
<line x1="750.6" y1="348.2" x2="762.5" y2="359.7" stroke="#000" stroke-width="3.2" stroke-linecap="round"/>
<line x1="651.2" y1="356.3" x2="638.2" y2="340.7" stroke="#000" stroke-width="3.2" stroke-linecap="round"/>
<line x1="740.3" y1="369.6" x2="762.5" y2="359.7" stroke="#000" stroke-width="3.2" stroke-linecap="round"/>
<line x1="661.4" y1="344.2" x2="638.2" y2="340.7" stroke="#000" stroke-width="3.2" stroke-linecap="round"/>
<line x1="786.9" y1="362.9" x2="780.7" y2="350.0" stroke="#000" stroke-width="3.2" stroke-linecap="round"/>
<line x1="701.7" y1="375.3" x2="673.5" y2="372.9" stroke="#000" stroke-width="3.2" stroke-linecap="round"/>
<line x1="688.8" y1="401.1" x2="712.0" y2="404.6" stroke="#000" stroke-width="3.2" stroke-linecap="round"/>
<line x1="750.6" y1="348.2" x2="729.9" y2="341.5" stroke="#000" stroke-width="3.2" stroke-linecap="round"/>
<line x1="724.0" y1="378.7" x2="729.9" y2="391.0" stroke="#000" stroke-width="3.2" stroke-linecap="round"/>
<line x1="780.7" y1="350.0" x2="797.8" y2="340.7" stroke="#000" stroke-width="3.2" stroke-linecap="round"/>
<line x1="734.3" y1="357.2" x2="740.3" y2="369.6" stroke="#000" stroke-width="3.2" stroke-linecap="round"/>
<line x1="706.1" y1="341.5" x2="700.1" y2="329.2" stroke="#000" stroke-width="3.2" stroke-linecap="round"/>
<line x1="695.7" y1="363.0" x2="673.5" y2="359.7" stroke="#000" stroke-width="3.2" stroke-linecap="round"/>
<line x1="718.0" y1="366.3" x2="695.7" y2="363.0" stroke="#000" stroke-width="3.2" stroke-linecap="round"/>
<line x1="734.3" y1="357.2" x2="729.9" y2="341.5" stroke="#000" stroke-width="3.2" stroke-linecap="round"/>
<line x1="734.3" y1="357.2" x2="712.0" y2="353.9" stroke="#000" stroke-width="3.2" stroke-linecap="round"/>
<line x1="762.5" y1="372.9" x2="774.6" y2="388.3" stroke="#000" stroke-width="3.2" stroke-linecap="round"/>
<line x1="652.8" y1="330.1" x2="638.2" y2="340.7" stroke="#000" stroke-width="3.2" stroke-linecap="round"/>
<line x1="747.2" y1="331.5" x2="724.0" y2="328.0" stroke="#000" stroke-width="3.2" stroke-linecap="round"/>
<line x1="688.8" y1="401.1" x2="694.1" y2="415.8" stroke="#000" stroke-width="3.2" stroke-linecap="round"/>
<line x1="741.9" y1="415.8" x2="764.1" y2="410.6" stroke="#000" stroke-width="3.2" stroke-linecap="round"/>
<line x1="651.2" y1="356.3" x2="649.1" y2="369.6" stroke="#000" stroke-width="3.2" stroke-linecap="round"/>
<line x1="673.5" y1="359.7" x2="673.5" y2="372.9" stroke="#000" stroke-width="3.2" stroke-linecap="round"/>
<line x1="669.1" y1="393.5" x2="638.2" y2="391.9" stroke="#000" stroke-width="3.2" stroke-linecap="round"/>
<line x1="700.1" y1="329.2" x2="718.0" y2="315.1" stroke="#000" stroke-width="3.2" stroke-linecap="round"/>
<line x1="750.6" y1="384.4" x2="762.5" y2="372.9" stroke="#000" stroke-width="3.2" stroke-linecap="round"/>
<line x1="685.4" y1="348.2" x2="661.4" y2="344.2" stroke="#000" stroke-width="3.2" stroke-linecap="round"/>
<line x1="695.7" y1="363.0" x2="701.7" y2="375.3" stroke="#000" stroke-width="3.2" stroke-linecap="round"/>
<line x1="757.7" y1="397.8" x2="783.2" y2="402.5" stroke="#000" stroke-width="3.2" stroke-linecap="round"/>
<line x1="706.1" y1="391.0" x2="712.0" y2="404.6" stroke="#000" stroke-width="3.2" stroke-linecap="round"/>
<line x1="786.9" y1="362.9" x2="807.1" y2="353.0" stroke="#000" stroke-width="3.2" stroke-linecap="round"/>
<line x1="762.5" y1="372.9" x2="784.8" y2="376.2" stroke="#000" stroke-width="3.2" stroke-linecap="round"/>
<line x1="750.6" y1="384.4" x2="774.6" y2="388.3" stroke="#000" stroke-width="3.2" stroke-linecap="round"/>
<line x1="700.1" y1="329.2" x2="671.9" y2="321.9" stroke="#000" stroke-width="3.2" stroke-linecap="round"/>
<line x1="718.0" y1="417.5" x2="741.9" y2="415.8" stroke="#000" stroke-width="3.2" stroke-linecap="round"/>
<line x1="774.6" y1="388.3" x2="784.8" y2="376.2" stroke="#000" stroke-width="3.2" stroke-linecap="round"/>
<line x1="712.0" y1="353.9" x2="729.9" y2="341.5" stroke="#000" stroke-width="3.2" stroke-linecap="round"/>
<line x1="655.3" y1="382.5" x2="628.9" y2="379.5" stroke="#000" stroke-width="3.2" stroke-linecap="round"/>
<line x1="729.9" y1="341.5" x2="706.1" y2="341.5" stroke="#000" stroke-width="3.2" stroke-linecap="round"/>
<line x1="649.1" y1="369.6" x2="628.9" y2="379.5" stroke="#000" stroke-width="3.2" stroke-linecap="round"/>
<line x1="724.0" y1="328.0" x2="718.0" y2="315.1" stroke="#000" stroke-width="3.2" stroke-linecap="round"/>
<line x1="652.8" y1="402.5" x2="671.9" y2="410.6" stroke="#000" stroke-width="3.2" stroke-linecap="round"/>
<line x1="718.0" y1="366.3" x2="740.3" y2="369.6" stroke="#000" stroke-width="3.2" stroke-linecap="round"/>
<line x1="784.8" y1="376.2" x2="810.2" y2="366.3" stroke="#000" stroke-width="3.2" stroke-linecap="round"/>
<line x1="628.9" y1="379.5" x2="638.2" y2="391.9" stroke="#000" stroke-width="3.2" stroke-linecap="round"/>
<line x1="661.4" y1="344.2" x2="651.2" y2="356.3" stroke="#000" stroke-width="3.2" stroke-linecap="round"/>
<line x1="774.6" y1="388.3" x2="783.2" y2="402.5" stroke="#000" stroke-width="3.2" stroke-linecap="round"/>
<line x1="718.0" y1="366.3" x2="712.0" y2="353.9" stroke="#000" stroke-width="3.2" stroke-linecap="round"/>
<line x1="729.9" y1="341.5" x2="747.2" y2="331.5" stroke="#000" stroke-width="3.2" stroke-linecap="round"/>
<line x1="706.1" y1="391.0" x2="688.8" y2="401.1" stroke="#000" stroke-width="3.2" stroke-linecap="round"/>
<line x1="706.1" y1="391.0" x2="729.9" y2="391.0" stroke="#000" stroke-width="3.2" stroke-linecap="round"/>
<line x1="762.5" y1="372.9" x2="762.5" y2="359.7" stroke="#000" stroke-width="3.2" stroke-linecap="round"/>
<line x1="712.0" y1="404.6" x2="735.9" y2="403.4" stroke="#000" stroke-width="3.2" stroke-linecap="round"/>
<line x1="673.5" y1="359.7" x2="661.4" y2="344.2" stroke="#000" stroke-width="3.2" stroke-linecap="round"/>
<line x1="766.9" y1="339.1" x2="797.8" y2="340.7" stroke="#000" stroke-width="3.2" stroke-linecap="round"/>
<line x1="741.9" y1="316.8" x2="718.0" y2="315.1" stroke="#000" stroke-width="3.2" stroke-linecap="round"/>
<line x1="724.0" y1="378.7" x2="750.6" y2="384.4" stroke="#000" stroke-width="3.2" stroke-linecap="round"/>
<line x1="678.3" y1="334.8" x2="671.9" y2="321.9" stroke="#000" stroke-width="3.2" stroke-linecap="round"/>
<line x1="810.2" y1="366.3" x2="807.1" y2="353.0" stroke="#000" stroke-width="3.2" stroke-linecap="round"/>
<line x1="706.1" y1="341.5" x2="678.3" y2="334.8" stroke="#000" stroke-width="3.2" stroke-linecap="round"/>
<line x1="628.9" y1="353.0" x2="625.8" y2="366.3" stroke="#000" stroke-width="3.2" stroke-linecap="round"/>
<line x1="797.8" y1="391.9" x2="807.1" y2="379.5" stroke="#000" stroke-width="3.2" stroke-linecap="round"/>
<line x1="671.9" y1="410.6" x2="694.1" y2="415.8" stroke="#000" stroke-width="3.2" stroke-linecap="round"/>
<line x1="735.9" y1="403.4" x2="757.7" y2="397.8" stroke="#000" stroke-width="3.2" stroke-linecap="round"/>
<line x1="784.8" y1="376.2" x2="786.9" y2="362.9" stroke="#000" stroke-width="3.2" stroke-linecap="round"/>
<line x1="712.0" y1="404.6" x2="718.0" y2="417.5" stroke="#000" stroke-width="3.2" stroke-linecap="round"/>
<line x1="786.9" y1="362.9" x2="810.2" y2="366.3" stroke="#000" stroke-width="3.2" stroke-linecap="round"/>
<line x1="740.3" y1="369.6" x2="750.6" y2="384.4" stroke="#000" stroke-width="3.2" stroke-linecap="round"/>
<line x1="718.0" y1="315.1" x2="694.1" y2="316.8" stroke="#000" stroke-width="3.2" stroke-linecap="round"/>
<line x1="762.5" y1="359.7" x2="780.7" y2="350.0" stroke="#000" stroke-width="3.2" stroke-linecap="round"/>
<line x1="750.6" y1="348.2" x2="747.2" y2="331.5" stroke="#000" stroke-width="3.2" stroke-linecap="round"/>
<line x1="701.7" y1="375.3" x2="685.4" y2="384.4" stroke="#000" stroke-width="3.2" stroke-linecap="round"/>
<line x1="669.1" y1="393.5" x2="652.8" y2="402.5" stroke="#000" stroke-width="3.2" stroke-linecap="round"/>
<line x1="766.9" y1="339.1" x2="764.1" y2="321.9" stroke="#000" stroke-width="3.2" stroke-linecap="round"/>
<line x1="807.1" y1="379.5" x2="810.2" y2="366.3" stroke="#000" stroke-width="3.2" stroke-linecap="round"/>
<line x1="678.3" y1="334.8" x2="661.4" y2="344.2" stroke="#000" stroke-width="3.2" stroke-linecap="round"/>
<line x1="685.4" y1="348.2" x2="673.5" y2="359.7" stroke="#000" stroke-width="3.2" stroke-linecap="round"/>
<line x1="718.0" y1="366.3" x2="701.7" y2="375.3" stroke="#000" stroke-width="3.2" stroke-linecap="round"/>
<line x1="694.1" y1="316.8" x2="671.9" y2="321.9" stroke="#000" stroke-width="3.2" stroke-linecap="round"/>
<line x1="784.8" y1="376.2" x2="797.8" y2="391.9" stroke="#000" stroke-width="3.2" stroke-linecap="round"/>
<line x1="718.0" y1="366.3" x2="724.0" y2="378.7" stroke="#000" stroke-width="3.2" stroke-linecap="round"/>
<line x1="685.4" y1="384.4" x2="688.8" y2="401.1" stroke="#000" stroke-width="3.2" stroke-linecap="round"/>
<line x1="735.9" y1="403.4" x2="764.1" y2="410.6" stroke="#000" stroke-width="3.2" stroke-linecap="round"/>
<line x1="762.5" y1="372.9" x2="786.9" y2="362.9" stroke="#000" stroke-width="3.2" stroke-linecap="round"/>
<line x1="673.5" y1="372.9" x2="655.3" y2="382.5" stroke="#000" stroke-width="3.2" stroke-linecap="round"/>
<line x1="729.9" y1="391.0" x2="712.0" y2="404.6" stroke="#000" stroke-width="3.2" stroke-linecap="round"/>
<line x1="673.5" y1="372.9" x2="685.4" y2="384.4" stroke="#000" stroke-width="3.2" stroke-linecap="round"/>
<line x1="712.0" y1="353.9" x2="706.1" y2="341.5" stroke="#000" stroke-width="3.2" stroke-linecap="round"/>
<line x1="724.0" y1="378.7" x2="706.1" y2="391.0" stroke="#000" stroke-width="3.2" stroke-linecap="round"/>
<line x1="764.1" y1="410.6" x2="783.2" y2="402.5" stroke="#000" stroke-width="3.2" stroke-linecap="round"/>
<line x1="651.2" y1="356.3" x2="628.9" y2="353.0" stroke="#000" stroke-width="3.2" stroke-linecap="round"/>
<line x1="774.6" y1="388.3" x2="797.8" y2="391.9" stroke="#000" stroke-width="3.2" stroke-linecap="round"/>
<line x1="729.9" y1="341.5" x2="724.0" y2="328.0" stroke="#000" stroke-width="3.2" stroke-linecap="round"/>
<line x1="747.2" y1="331.5" x2="741.9" y2="316.8" stroke="#000" stroke-width="3.2" stroke-linecap="round"/>
<line x1="625.8" y1="366.3" x2="628.9" y2="379.5" stroke="#000" stroke-width="3.2" stroke-linecap="round"/>
<line x1="712.0" y1="404.6" x2="694.1" y2="415.8" stroke="#000" stroke-width="3.2" stroke-linecap="round"/>
<line x1="724.0" y1="328.0" x2="700.1" y2="329.2" stroke="#000" stroke-width="3.2" stroke-linecap="round"/>
<line x1="762.5" y1="359.7" x2="786.9" y2="362.9" stroke="#000" stroke-width="3.2" stroke-linecap="round"/>
<line x1="701.7" y1="375.3" x2="724.0" y2="378.7" stroke="#000" stroke-width="3.2" stroke-linecap="round"/>
<line x1="685.4" y1="348.2" x2="678.3" y2="334.8" stroke="#000" stroke-width="3.2" stroke-linecap="round"/>
<line x1="694.1" y1="415.8" x2="718.0" y2="417.5" stroke="#000" stroke-width="3.2" stroke-linecap="round"/>
</svg>
<div class="t" style="left:399px;top:57px;font-size:28px;line-height:28px;font-weight:bold;color:#000;transform:scaleX(0.856);transform-origin:0 0;">time 0.000: KAPAR</div>
<div style="position:absolute;left:393px;top:681px;width:185px;height:20px;background:#000"></div>
<div class="t" style="left:-115px;width:1200px;text-align:center;top:683px;font-size:11px;line-height:11px;color:#fff;transform:scaleX(0.9);transform-origin:50% 0;">2mm</div>
<div style="position:absolute;left:1062px;top:46px;width:15px;height:655px;background:#e4e4e4;border-left:1px solid #808080;border-right:1px solid #808080;box-sizing:border-box"></div>
<div class="sb" style="left:1062px;top:46px;width:13px;height:14px;"></div>
<div style="position:absolute;left:1066.0px;top:51.5px;width:0;height:0;border-left:3.5px solid transparent;border-right:3.5px solid transparent;border-bottom:4px solid #404040"></div>
<div class="sb" style="left:1062px;top:686px;width:13px;height:13px;"></div>
<div style="position:absolute;left:1066.0px;top:692.0px;width:0;height:0;border-left:3.5px solid transparent;border-right:3.5px solid transparent;border-top:4px solid #404040"></div>
<div style="position:absolute;left:1077px;top:46px;width:15px;height:655px;background:#e4e4e4;border-left:1px solid #808080;border-right:1px solid #808080;box-sizing:border-box"></div>
<div class="sb" style="left:1077px;top:46px;width:13px;height:14px;"></div>
<div style="position:absolute;left:1081.0px;top:51.5px;width:0;height:0;border-left:3.5px solid transparent;border-right:3.5px solid transparent;border-bottom:4px solid #404040"></div>
<div class="sb" style="left:1077px;top:686px;width:13px;height:13px;"></div>
<div style="position:absolute;left:1081.0px;top:692.0px;width:0;height:0;border-left:3.5px solid transparent;border-right:3.5px solid transparent;border-top:4px solid #404040"></div>
<div class="sb" style="left:1077px;top:356px;width:13px;height:34px"></div>
<div class="sb" style="left:1062px;top:466px;width:13px;height:34px"></div>
<div style="position:absolute;left:393px;top:702px;width:669px;height:14px;background:#e4e4e4;border-top:1px solid #808080;border-bottom:1px solid #808080;box-sizing:border-box"></div>
<div class="sb" style="left:393px;top:702px;width:13px;height:12px;"></div>
<div style="position:absolute;left:398.0px;top:705.5px;width:0;height:0;border-top:3.5px solid transparent;border-bottom:3.5px solid transparent;border-right:4px solid #404040"></div>
<div class="sb" style="left:1047px;top:702px;width:13px;height:12px;"></div>
<div style="position:absolute;left:1053.0px;top:705.5px;width:0;height:0;border-top:3.5px solid transparent;border-bottom:3.5px solid transparent;border-left:4px solid #404040"></div>
<div class="sb" style="left:797px;top:702px;width:14px;height:12px"></div>
<div style="position:absolute;left:1062px;top:702px;width:15px;height:15px;background:#fff;border:1px solid #000;box-sizing:border-box"></div>
<div style="position:absolute;left:1077px;top:702px;width:15px;height:15px;background:#fff;border:1px solid #000;box-sizing:border-box"></div>
<div style="position:absolute;left:1094px;top:46px;width:65px;height:15px;background:#fff"></div>
<div style="position:absolute;left:1094px;top:60px;width:65px;height:60px;overflow:hidden">
<div class="t" style="left:-535px;width:600px;text-align:right;top:4px;font-size:11px;line-height:11px;color:#000;transform:scaleX(0.83);transform-origin:100% 0;">az:-45.00</div>
<div class="t" style="left:-535px;width:600px;text-align:right;top:21px;font-size:11px;line-height:11px;color:#000;transform:scaleX(0.83);transform-origin:100% 0;">el:33.75</div>
<div class="t" style="left:-535px;width:600px;text-align:right;top:38px;font-size:11px;line-height:11px;color:#000;transform:scaleX(0.83);transform-origin:100% 0;">ro:0.00</div>
</div>
<div class="t" style="left:393px;top:717px;font-size:11px;line-height:11px;font-weight:bold;color:#000;transform:scaleX(0.857);transform-origin:0 0;">WILDTYPE&nbsp; 96 FEs. Step 0 of 275, 0.000 s.</div>
<div class="t" style="left:393px;top:732px;font-size:11px;line-height:11px;font-weight:bold;color:#000;transform:scaleX(0.871);transform-origin:0 0;">Growth: area 1.00, linear 1.00. Strain max 0.00% average 0.00%. Av. strain retention 0%.</div>
</div></body></html>
